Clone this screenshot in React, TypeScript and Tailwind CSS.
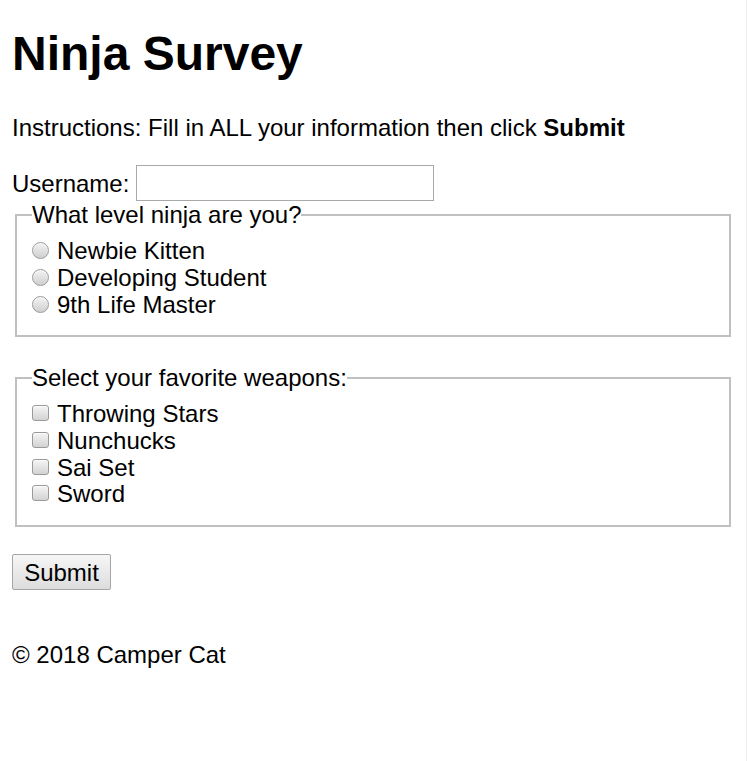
const LEVELS = ["Newbie Kitten", "Developing Student", "9th Life Master"];
const WEAPONS = ["Throwing Stars", "Nunchucks", "Sai Set", "Sword"];

// old-chrome style form controls
const radioCls =
  "mt-[4px] h-[17px] w-[17px] shrink-0 appearance-none rounded-full border border-[#9a9a9a] bg-gradient-to-b from-[#f3f3f3] to-[#cfcfcf] shadow-[inset_0_1px_1px_rgba(255,255,255,0.8)]";
const checkCls =
  "mt-[4px] h-[16px] w-[17px] shrink-0 appearance-none rounded-[3px] border border-[#9a9a9a] bg-gradient-to-b from-[#f5f5f5] to-[#d3d3d3] shadow-[inset_0_1px_1px_rgba(255,255,255,0.8)]";

export default function App() {
  return (
    <div className="min-h-screen w-full border-r border-[#ececec] bg-white px-3 pt-[26px] font-['Liberation_Sans',Arial,sans-serif] text-[24px] leading-[27px] text-black">
      <h1 className="text-[48px] font-bold leading-[55px]">Ninja Survey</h1>

      <p className="mt-[33px]">
        Instructions: Fill in ALL your information then click <strong className="font-bold">Submit</strong>
      </p>

      <form onSubmit={(e) => e.preventDefault()}>
        <div className="mt-[24px] flex h-[36px] items-center">
          <label htmlFor="username">Username:</label>
          <input
            id="username"
            type="text"
            className="ml-[7px] h-[36px] w-[298px] border border-[#a9a9a9] bg-white px-1 text-[24px] outline-none"
          />
        </div>

        <fieldset className="mx-[3px] border-2 border-[#c0c0c0] pb-[17px] pl-[15px] pr-[15px] pt-[10px]">
          <legend className="px-0 leading-[27px]">What level ninja are you?</legend>
          {LEVELS.map((lvl, i) => (
            <label key={lvl} className="flex h-[26.8px] items-start leading-[26.8px]">
              <input type="radio" name="level" value={i} className={radioCls} />
              <span className="ml-[8px]">{lvl}</span>
            </label>
          ))}
        </fieldset>

        <fieldset className="mx-[3px] mt-[27px] border-2 border-[#c0c0c0] pb-[17px] pl-[15px] pr-[15px] pt-[10px]">
          <legend className="px-0 leading-[27px]">Select your favorite weapons:</legend>
          {WEAPONS.map((w) => (
            <label key={w} className="flex h-[26.7px] items-start leading-[26.7px]">
              <input type="checkbox" name="weapons" value={w} className={checkCls} />
              <span className="ml-[8px]">{w}</span>
            </label>
          ))}
        </fieldset>

        <button
          type="submit"
          className="mt-[27px] flex h-[36px] w-[99px] items-center justify-center rounded-[2px] border border-[#a6a6a6] bg-gradient-to-b from-[#f6f6f6] to-[#dddddd] text-[24px] leading-[27px]"
        >
          Submit
        </button>
      </form>

      <footer className="mt-[51px]">© 2018 Camper Cat</footer>
    </div>
  );
}
